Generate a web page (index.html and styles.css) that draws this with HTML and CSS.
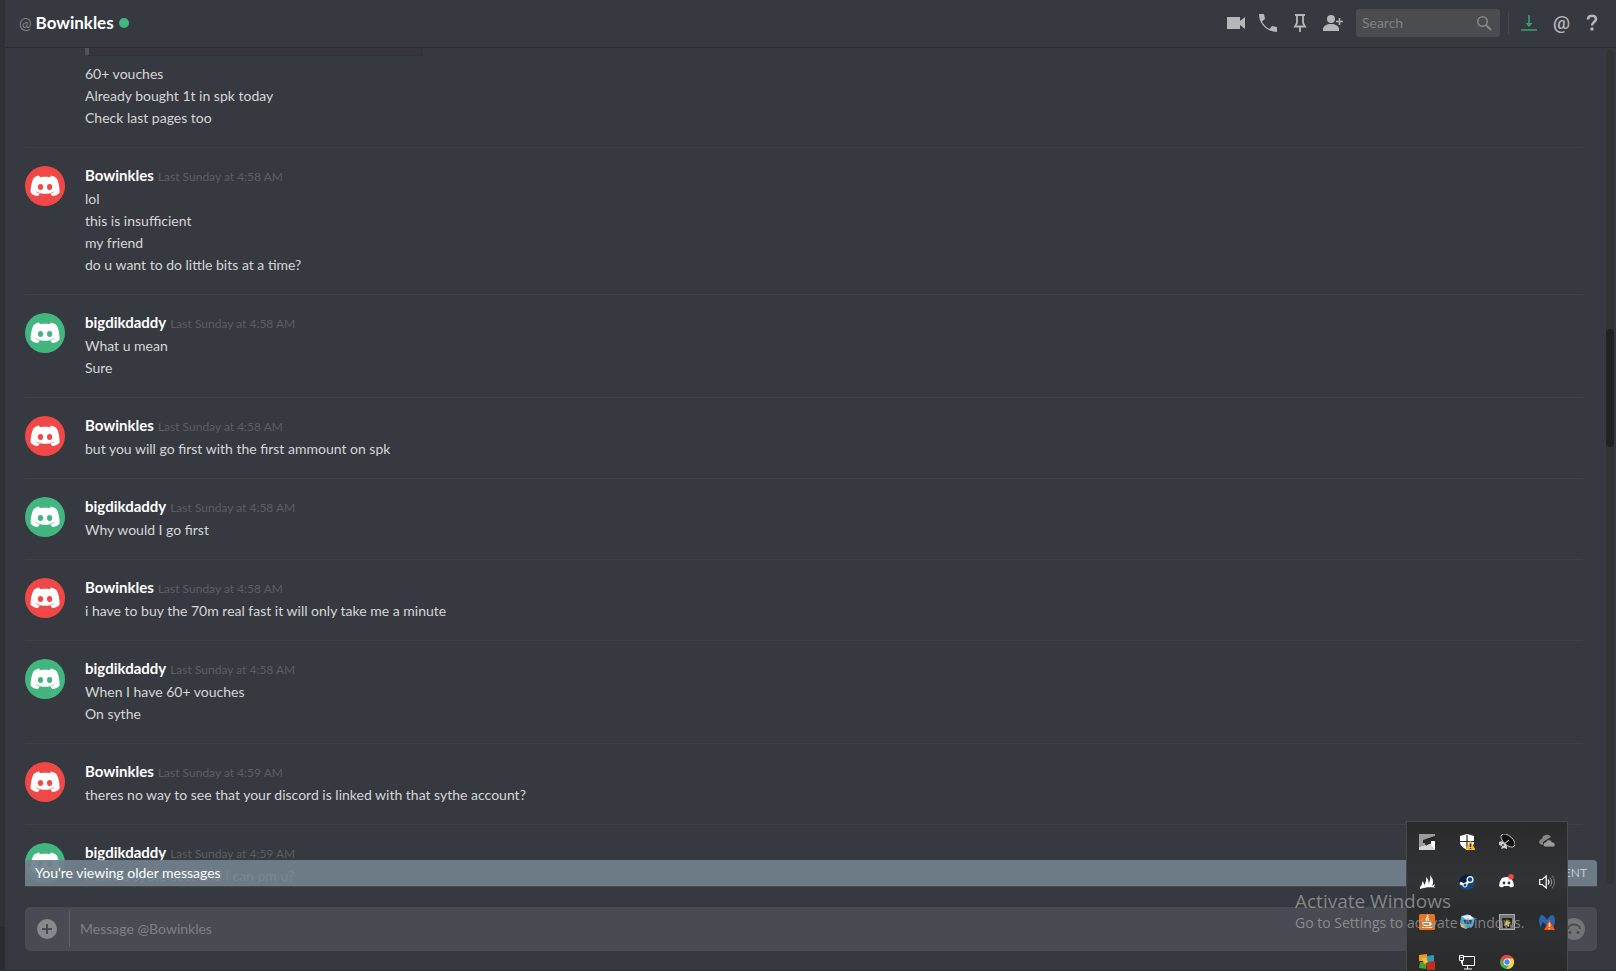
FILE: index.html
```html
<!DOCTYPE html>
<html lang="en">
<head>
<meta charset="utf-8">
<title>Bowinkles</title>
<link rel="stylesheet" href="styles.css">
</head>
<body>
<svg width="0" height="0" class="defs" aria-hidden="true">
  <symbol id="logo" viewBox="0 0 40 40">
    <path fill="#fff" d="M14 9.500C11 10.200 9 11.500 8.400 12.500C6.500 16.500 5.600 21 5.600 26.500C7.200 28.800 9.600 30 13 30L14.800 27.600C12.600 27 11.300 26.200 10.700 25.300C16.500 28.700 24 28.700 29.600 25.300C29 26.200 27.500 27.100 25.400 27.600L27.200 30C30.500 30 33 28.800 34.600 26.500C34.600 21 33.700 16.500 31.800 12.500C30 10.800 28 9.900 25.800 9.500L25 11.200C22 10.700 18 10.700 15 11.200Z"/>
    <ellipse cx="15.500" cy="21" rx="2.600" ry="2.900" fill="currentColor"/>
    <ellipse cx="24.600" cy="21" rx="2.600" ry="2.900" fill="currentColor"/>
  </symbol>
</svg>
<div class="app">
  <div class="rail"><div class="rail-foot"></div></div>
  <div class="chat">
    <header class="bar">
      <span class="at">@</span>
      <h1 class="title">Bowinkles</h1>
      <span class="status"></span>
      <div class="tools">
        <button class="tool" aria-label="Video call"><svg width="20" height="20" viewBox="0 0 20 20"><path fill="currentColor" d="M1 4h13v4l5-4v12l-5-4v4H1z"/></svg></button>
        <button class="tool" aria-label="Voice call"><svg width="20" height="20" viewBox="0 0 20 20"><path fill="currentColor" d="M1 1h5l1 5-3 2.500c1.500 3 4 5.500 7.500 7.500l2.500-3 5 1v5C9 19 1 11 1 1z"/></svg></button>
        <button class="tool" aria-label="Pinned messages"><svg width="20" height="20" viewBox="0 0 20 20" fill="none" stroke="currentColor" stroke-width="1.800"><path d="M5 2h10M7 2v8l-2 3.500h10L13 10V2M10 14v5"/></svg></button>
        <button class="tool" aria-label="Add friends"><svg width="22" height="20" viewBox="0 0 22 20"><g fill="currentColor"><circle cx="9" cy="6" r="4"/><path d="M1 18v-2c0-3 4-5 8-5s8 2 8 5v2z"/></g><path stroke="currentColor" stroke-width="1.500" d="M14 8.500h7M17.500 5v7"/></svg></button>
        <div class="search">
          <input type="text" placeholder="Search" aria-label="Search">
          <svg width="16" height="16" viewBox="0 0 16 16" fill="none" stroke="currentColor" stroke-width="1.600"><circle cx="6.500" cy="6.500" r="4.700"/><path d="M10 10l5 5" stroke-width="2"/></svg>
        </div>
        <span class="split"></span>
        <button class="tool update" aria-label="Update ready"><svg width="18" height="20" viewBox="0 0 18 20"><path d="M9 2v11" stroke="currentColor" stroke-width="1.600"/><path d="M5.500 10h7L9 14z" fill="currentColor"/><path d="M1 17h16" stroke="currentColor" stroke-width="1.600"/></svg></button>
        <button class="tool mention" aria-label="Mentions">@</button>
        <button class="tool help" aria-label="Help"><svg width="12" height="18" viewBox="0 0 12 18"><path d="M2 5.500c0-5 8-5 8-.500 0 3-4 3-4 6.500" fill="none" stroke="currentColor" stroke-width="2.600"/><circle cx="6" cy="15" r="1.700" fill="currentColor"/></svg></button>
      </div>
    </header>
    <main class="feed">
      <div class="list">
        <section class="first">
          <div class="embed"></div>
          <p>60+ vouches</p><p>Already bought 1t in spk today</p><p>Check last pages too</p>
        </section>
        <section class="group"><svg class="avatar red"><use href="#logo"/></svg><div><h2>Bowinkles <time>Last Sunday at 4:58 AM</time></h2><p>lol</p><p>this is insufficient</p><p>my friend</p><p>do u want to do little bits at a time?</p></div></section>
        <section class="group"><svg class="avatar green"><use href="#logo"/></svg><div><h2>bigdikdaddy <time>Last Sunday at 4:58 AM</time></h2><p>What u mean</p><p>Sure</p></div></section>
        <section class="group"><svg class="avatar red"><use href="#logo"/></svg><div><h2>Bowinkles <time>Last Sunday at 4:58 AM</time></h2><p>but you will go first with the first ammount on spk</p></div></section>
        <section class="group"><svg class="avatar green"><use href="#logo"/></svg><div><h2>bigdikdaddy <time>Last Sunday at 4:58 AM</time></h2><p>Why would I go first</p></div></section>
        <section class="group"><svg class="avatar red"><use href="#logo"/></svg><div><h2>Bowinkles <time>Last Sunday at 4:58 AM</time></h2><p>i have to buy the 70m real fast it will only take me a minute</p></div></section>
        <section class="group"><svg class="avatar green"><use href="#logo"/></svg><div><h2>bigdikdaddy <time>Last Sunday at 4:58 AM</time></h2><p>When I have 60+ vouches</p><p>On sythe</p></div></section>
        <section class="group"><svg class="avatar red"><use href="#logo"/></svg><div><h2>Bowinkles <time>Last Sunday at 4:59 AM</time></h2><p>theres no way to see that your discord is linked with that sythe account?</p></div></section>
        <section class="group"><svg class="avatar green"><use href="#logo"/></svg><div><h2>bigdikdaddy <time>Last Sunday at 4:59 AM</time></h2><p>Make a sythe acct and I can pm u?</p></div></section>
      </div>
      <div class="track"><div class="thumb"></div></div>
      <div class="older"><span>You're viewing older messages</span><button class="jump">JUMP TO PRESENT</button></div>
    </main>
    <form class="composer">
      <button type="button" class="attach" aria-label="Attach a file"><svg width="20" height="20" viewBox="0 0 20 20"><circle cx="10" cy="10" r="10" fill="#87898c"/><path d="M10 5v10M5 10h10" stroke="#484b51" stroke-width="2"/></svg></button>
      <input type="text" placeholder="Message @Bowinkles" aria-label="Message @Bowinkles">
      <button type="button" class="emoji" aria-label="Emoji"><svg width="22" height="22" viewBox="0 0 22 22"><circle cx="11" cy="11" r="11" fill="#727478"/><path d="M5 11c0-6 12-6 12 0" fill="none" stroke="#484b51" stroke-width="1.800"/><circle cx="7" cy="14.500" r="1.500" fill="#484b51"/><circle cx="15" cy="14.500" r="1.500" fill="#484b51"/></svg></button>
    </form>
  </div>
</div>

<aside class="tray" aria-label="Hidden notification icons">
  <svg viewBox="0 0 16 16"><path fill="#9b9b9b" d="M0 0h16v2L6 6v5l-6 2z"/><path fill="#d4d4d4" d="M0 13l6-2 5-1 5-3v9H0z"/><path fill="#fff" d="M12 7h4v8l-4-4z"/><path fill="#29292a" d="M4 6l12-4v5h-4l-5 5v-3H4z"/></svg>
  <svg viewBox="0 0 16 16"><path fill="#fff" d="M8 0l7 2v6c0 4-4 6-7 8-3-2-7-4-7-8V2z"/><path stroke="#2b2b2c" stroke-width="1.200" d="M8 1v14M1 7.500h14"/><path fill="#fbbf17" d="M11.500 6.500l5 9.500h-10z"/><path stroke="#222" stroke-width="1.400" d="M11.500 9.500v3.500M11.500 14v1"/></svg>
  <svg viewBox="0 0 16 16"><ellipse cx="9" cy="6.500" rx="8.500" ry="4.500" transform="rotate(42 9 6.500)" fill="#101010" stroke="#ddd" stroke-width=".8"/><path stroke="#ddd" d="M5 10l5-4"/><path fill="#c9c9c9" d="M0 8l3-1 3 2 2 3 0 3-3-1-3 1 1-3-3-1z"/><circle cx="4" cy="11" r="1" fill="#444"/></svg>
  <svg viewBox="0 0 16 16"><path fill="#858585" d="M1 10a3 3 0 0 1 2-5 5 5 0 0 1 9-2L7 6 4 8v3z"/><path fill="#9a9a9a" stroke="#2b2b2c" stroke-width=".8" d="M6 13c-3-1-2-5 1-5 1-3 5-3 6 0 4 0 4 5 1 5z"/></svg>
  <svg viewBox="0 0 16 16"><path fill="#fff" d="M1 13q3-3 2-6 3 2 2 5 3-5 2-9 4 3 2 8 3-5 2-10 5 6 2 11l3-2-1 3 2 1c-5-1-10-1-16 1z"/></svg>
  <svg viewBox="0 0 16 16"><circle cx="8" cy="8" r="8" fill="#17477f"/><path fill="#0a1d42" d="M0 8a8 8 0 0 1 14-5L3 11z"/><path stroke="#fff" stroke-width="2.600" d="M1 9l5 2 4-4"/><circle cx="11" cy="5.500" r="2.900" fill="#17477f" stroke="#fff" stroke-width="1.300"/><circle cx="6" cy="11" r="2" fill="#17477f" stroke="#fff"/></svg>
  <svg viewBox="0 0 16 16"><path fill="#fff" d="M3 4q5-2 9 0 3 4 3 8-2 2-4 1l-1-1H5l-1 1q-2 1-4-1 0-4 3-8z"/><circle cx="5" cy="9" r="1.400" fill="#333"/><circle cx="10" cy="9" r="1.400" fill="#333"/><circle cx="12" cy="2.800" r="2.800" fill="#f04747"/></svg>
  <svg viewBox="0 0 16 16" fill="none" stroke="#fff"><path stroke-width="1.200" d="M.7 5.500h2.500l4-3.500v12l-4-3.500H.7z"/><path stroke-width="1.200" d="M9 5.500q2 2.500 0 5"/><path stroke="#999" d="M11 3.500q3.500 4.500 0 9"/><path stroke="#777" d="M13 1.500q5 6.500 0 13"/></svg>
  <svg viewBox="0 0 16 16"><rect width="16" height="16" rx="1.500" fill="#e5741f"/><g fill="none" stroke="#fff" stroke-width="1.200"><path d="M8 1c3 2-3 3 0 6M10 4c-1 1-1 2 0 3M4 8.500h7v3H5zM11 9q3 0 0 2M3 13.500h10"/></g></svg>
  <svg viewBox="0 0 16 16"><path fill="#3ba7cd" d="M2 3l6-3 8 4-2 8-7 3-6-6z"/><path fill="#e8f3f5" d="M2 2l9-1 4 4-7 1z"/><path fill="#1b4e78" d="M4 6l9 0-1 4-6 0z"/><path fill="#d6bb87" d="M1 9l5 2 1 4-5-2z"/></svg>
  <svg viewBox="0 0 16 16"><rect x=".5" y=".5" width="15" height="15" fill="#777" stroke="#aaa"/><path fill="#222" d="M3 4h10v10H4z"/><path fill="#eebd35" d="M8 5l1 3 3 0-2 2 0 3-3-2-2 1 1-3z"/></svg>
  <svg viewBox="0 0 16 16"><path fill="#2767b5" d="M2 14Q-2 6 2 1q3 0 6 5 3-5 6-5 4 5 0 13l-2-6-4 4-4-4q-2 3-2 6z"/><path fill="#fa5a0a" d="M10.500 6l5.500 10H5z"/><path stroke="#fff" stroke-width="1.400" d="M10.500 9v4M10.500 14v1"/></svg>
  <svg viewBox="0 0 16 16"><path fill="#ef9a20" d="M0 1l8-1v7H0z"/><path fill="#279bb9" d="M8 2l7-1v7H8z"/><path fill="#4b9f39" d="M1 8h7l-1 7-7-1z"/><path fill="#c62c20" d="M8 8l8-1v9H8z"/><path fill="#f2c135" d="M3 4l4 0 2 4-4 2z"/></svg>
  <svg viewBox="0 0 16 16" fill="none" stroke="#fff"><path d="M5 2.500h10.500v9H3.500V7M8.500 12v3M5 15h8M.5 1.500h4v5h-4zM2.500 6.500v3M1.500 3.500h2"/></svg>
  <svg viewBox="0 0 16 16"><circle cx="8" cy="8" r="7" fill="#4caf50"/><path fill="#e8453c" d="M1.900 4.500A7 7 0 0 1 14.100 4.500L8 5 5 10z"/><path fill="#ffcd40" d="M14.100 4.500A7 7 0 0 1 7.500 15L11 9 8 4.500z"/><circle cx="8" cy="8" r="3.500" fill="#fff"/><circle cx="8" cy="8" r="2.700" fill="#4285f4"/></svg>
</aside>
<div class="watermark"><p class="wm-title">Activate Windows</p><p>Go to Settings to activate Windows.</p></div>
</body>
</html>
```
FILE: styles.css
```css
* { box-sizing: border-box; }
body { margin: 0; height: 100vh; overflow: hidden; background: #36393f; color: #d5d6d8; font: 14px/22px Lato, sans-serif; position: relative; }
p, h1, h2 { margin: 0; font: inherit; }
button, input { font: inherit; color: inherit; background: none; border: 0; padding: 0; }
.defs { position: absolute; }
.app { display: flex; height: 100%; border-bottom: 1px solid #302f35; }
.rail { display: flex; align-items: flex-end; width: 5px; background: #2f3136; }
.rail-foot { width: 5px; height: 43px; background: #2a2c31; }
.chat { flex: 1; display: flex; flex-direction: column; min-width: 0; }
.bar { flex: none; display: flex; align-items: center; height: 48px; padding: 0 18px 2px 14px; border-bottom: 1px solid #2b2d31; }
.at { color: #83868c; margin-right: 4px; font-size: 15px; }
.title { color: #fff; font-weight: 700; font-size: 17px; }
.status { width: 10px; height: 10px; border-radius: 50%; background: #43b581; margin-left: 5px; }
.tools { margin-left: auto; display: flex; align-items: center; color: #b5b7b9; }
.tool { display: flex; margin-right: 12px; }
.search { display: flex; align-items: center; width: 144px; height: 28px; padding: 0 8px 0 6px; background: #4b4c50; border-radius: 3px; color: #85878a; }
.search input { flex: 1; min-width: 0; }
input::placeholder { color: #7e8084; opacity: 1; }
.split { width: 1px; height: 22px; background: #45484e; margin: 0 11px 0 8px; }
.update { margin-right: 15px; color: #3c9b74; }
.mention { margin-right: 16px; font-family: Roboto, sans-serif; font-size: 19px; font-weight: 500; }
.help { margin-right: 0; }
.feed { position: relative; flex: 1; min-height: 0; overflow: hidden; }
.list { margin: 0 33px 0 20px; }
.first { padding: 0 0 18px 60px; }
.embed { width: 338px; height: 8px; margin-bottom: 7px; background: #34363b; border: solid #303237; border-width: 0 1px 1px 0; border-left: 4px solid #4f545c; border-radius: 0 0 3px 3px; }
.group { display: flex; gap: 20px; border-top: 1px solid #3f4248; padding: 18px 0; }
.avatar { flex: none; width: 40px; height: 40px; border-radius: 50%; }
.red { background: #f04747; color: #f04747; }
.green { background: #43b581; color: #43b581; }
h2 { display: flex; align-items: baseline; gap: 4px; height: 22px; color: #fff; font-size: 15px; font-weight: 700; line-height: 18px; }
time { color: #5b5e64; font-size: 12px; font-weight: 400; }
.track { position: absolute; top: 2px; right: 2px; bottom: 3px; width: 8px; padding-top: 279px; border-radius: 4px; background: #313337; }
.thumb { height: 14%; min-height: 118px; border-radius: 4px; background: #202225; }
.older { position: absolute; left: 20px; right: 19px; bottom: 0; display: flex; justify-content: space-between; align-items: center; height: 27px; padding: 0 10px; border-bottom: 1px solid #494c52; border-radius: 0 4px 0 0; background: rgba(113, 128, 141, 0.93); color: #fff; }
.jump { color: #c3c8cd; font-size: 12px; }
.composer { flex: none; display: flex; align-items: center; height: 44px; margin: 20px 19px 19px 20px; padding: 0 12px; border-radius: 5px; background: #484b51; }
.attach { display: flex; align-items: center; height: 36px; padding-right: 12px; border-right: 1px solid #5d6065; }
.composer input { flex: 1; min-width: 0; padding-left: 10px; }
.emoji { display: flex; }
.tray { position: absolute; right: 48px; bottom: 0; display: grid; grid-template-columns: repeat(4, 16px); grid-auto-rows: 16px; gap: 24px; width: 162px; height: 150px; padding: 12px; overflow: hidden; border: 1px solid #47484b; border-bottom: 0; background: linear-gradient(#2a2a2b, #323335 40%, #2b2c2d 60%, #2f3031 75%, #2a2a2b); }
.tray svg { width: 16px; height: 16px; }
.watermark { position: absolute; right: 84px; bottom: 37px; width: 237px; color: rgba(160, 161, 163, 0.75); font-family: "Open Sans", sans-serif; white-space: nowrap; }
.wm-title { font-size: 19px; }
```
